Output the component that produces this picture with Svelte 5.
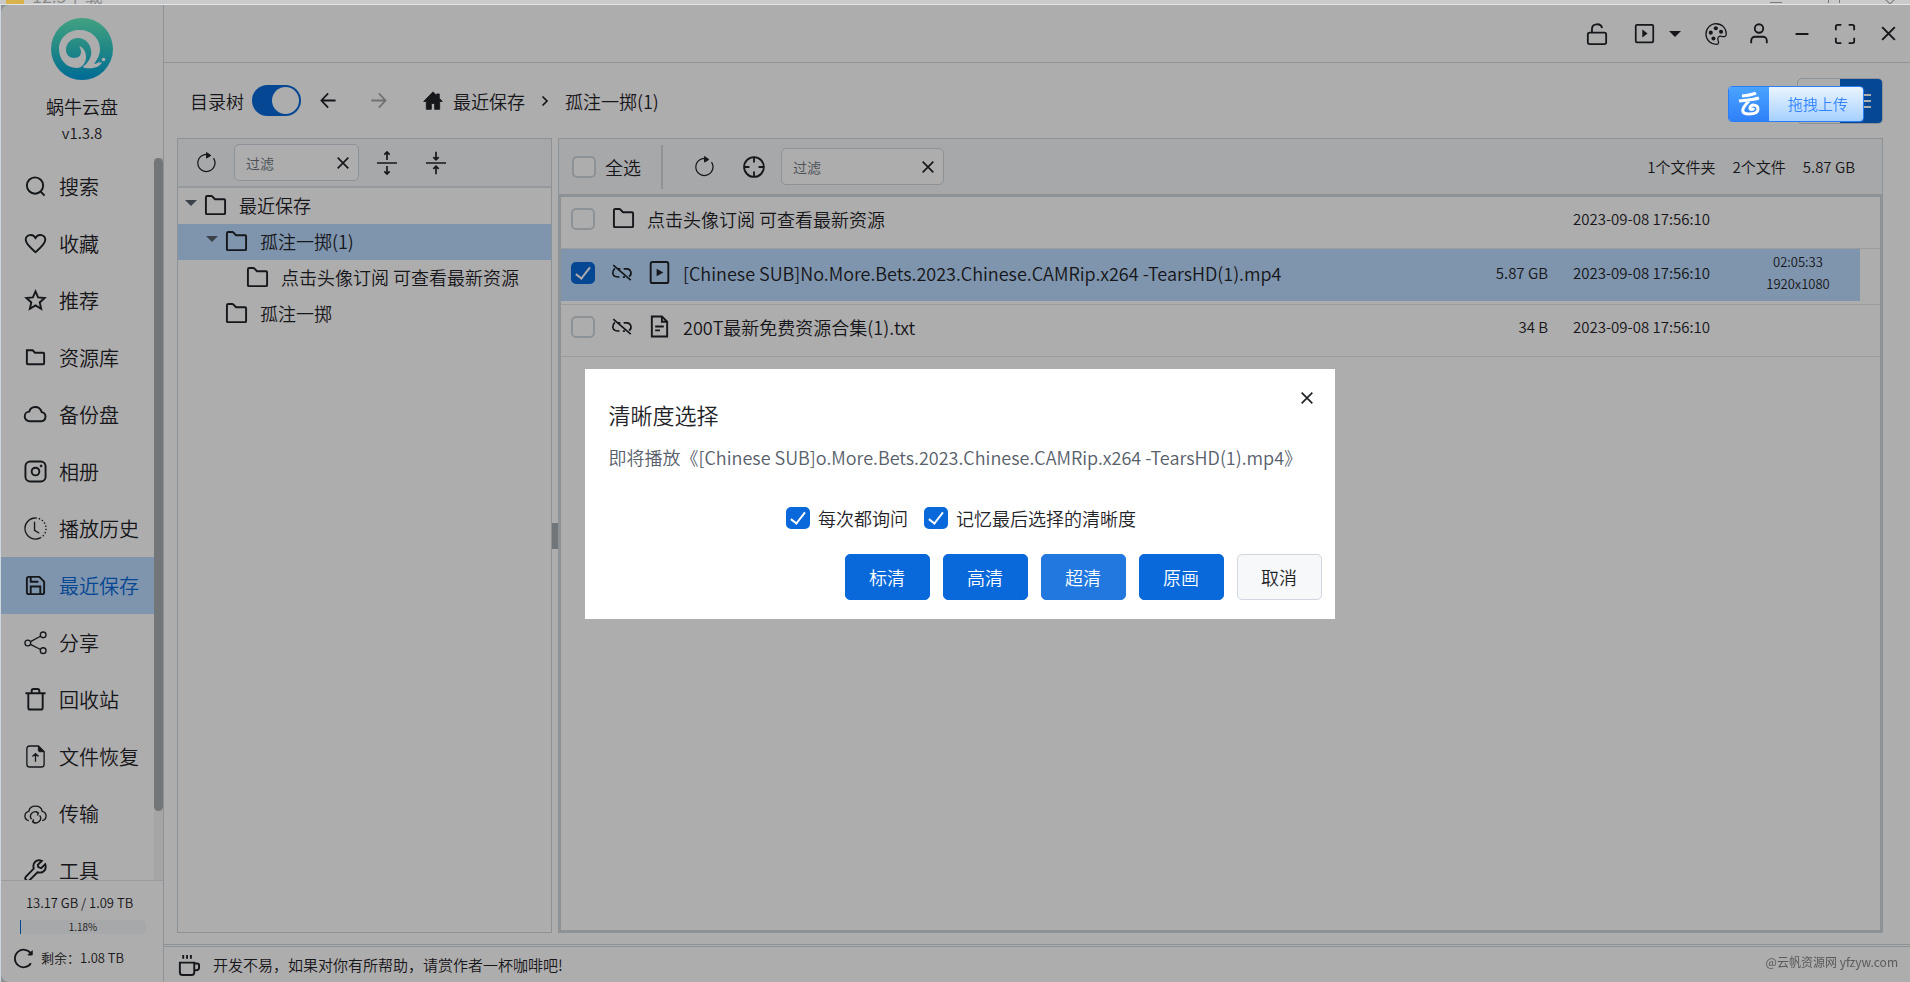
<script>
  const menu = [
    { label: '搜索', icon: 'search' },
    { label: '收藏', icon: 'heart' },
    { label: '推荐', icon: 'star' },
    { label: '资源库', icon: 'folderSmall' },
    { label: '备份盘', icon: 'cloud' },
    { label: '相册', icon: 'album' },
    { label: '播放历史', icon: 'history' },
    { label: '最近保存', icon: 'save' },
    { label: '分享', icon: 'share' },
    { label: '回收站', icon: 'trash' },
    { label: '文件恢复', icon: 'fileUp' },
    { label: '传输', icon: 'transfer' },
    { label: '工具', icon: 'wrench' },
  ];

  const tree = [
    { name: '最近保存', level: 0, open: true },
    { name: '孤注一掷(1)', level: 1, open: true },
    { name: '点击头像订阅 可查看最新资源', level: 2, open: false },
    { name: '孤注一掷', level: 1, open: false },
  ];

  let files = $state([
    { name: '点击头像订阅 可查看最新资源', type: 'folder', size: '', date: '2023-09-08 17:56:10', checked: false },
    {
      name: '[Chinese SUB]No.More.Bets.2023.Chinese.CAMRip.x264 -TearsHD(1).mp4',
      type: 'video',
      size: '5.87 GB',
      date: '2023-09-08 17:56:10',
      duration: '02:05:33',
      resolution: '1920x1080',
      checked: true,
    },
    { name: '200T最新免费资源合集(1).txt', type: 'text', size: '34 B', date: '2023-09-08 17:56:10', checked: false },
  ]);

  let active = $state('最近保存');
  let selectedNode = $state(1);
  let showTree = $state(true);
  let treeFilter = $state('');
  let fileFilter = $state('');
  let askEveryTime = $state(true);
  let rememberLast = $state(true);
  let dialogOpen = $state(true);

  const usedPercent = 1.18;
  const qualities = ['标清', '高清', '超清', '原画'];
  const close = () => (dialogOpen = false);
</script>

{#snippet icon(name, size = 24)}
  <svg class="icon" width={size} height={size} viewBox="0 0 24 24" aria-hidden="true">
    {#if name === 'search'}
      <circle cx="11.5" cy="11" r="8.5" /><path d="M17.5 17.5l4 4" />
    {:else if name === 'heart'}
      <path d="M12 21C8 17.500 1.800 12.800 1.800 8.200 1.800 2.800 9 1.200 12 6.200 15 1.200 22.200 2.800 22.200 8.200 22.200 12.800 16 17.500 12 21z" />
    {:else if name === 'star'}
      <path d="M12 2.500l2.700 6.300 6.800.6-5.100 4.600 1.500 6.700L12 17.200l-5.900 3.500 1.500-6.700-5.100-4.600 6.800-.6z" />
    {:else if name === 'folderSmall'}
      <path d="M3 4.500h6l2.500 2.500H20a1 1 0 0 1 1 1v10a1 1 0 0 1-1 1H4a1 1 0 0 1-1-1z" />
    {:else if name === 'folder'}
      <path d="M2 3.500c0-1 .5-1.500 1.500-1.500h4l1 .5 3 3H21c.7 0 1 .4 1 1V20c0 .7-.4 1-1 1H3c-.7 0-1-.4-1-1z" />
    {:else if name === 'cloud'}
      <path d="M6 19a5 5 0 0 1-.5-10C7 3 16 2 18.500 9.500A4.800 4.800 0 0 1 18 19z" />
    {:else if name === 'album'}
      <rect x="1.500" y="1.500" width="21" height="21" rx="5" /><circle cx="12" cy="12" r="4" /><circle class="solid" cx="17.800" cy="6.200" r="1" />
    {:else if name === 'history'}
      <g class="thin"><path d="M12 1a11 11 0 1 0 5 20.800" /><path d="M12 1a11 11 0 0 1 5 20.800" stroke-dasharray="1.500 2" /><path d="M11 5v9l5 3" /></g>
    {:else if name === 'save'}
      <path d="M5 3h11l5 5v11a2 2 0 0 1-2 2H5a2 2 0 0 1-2-2V5a2 2 0 0 1 2-2zM7 21v-8h10v8M7 3v5h8" />
    {:else if name === 'share'}
      <g class="thin"><circle cx="4" cy="12.500" r="3" /><circle cx="20" cy="4" r="3" /><circle cx="20" cy="20.500" r="3" /><path d="M6.800 11l10.400-5.500M6.800 14l10.400 5.300" /></g>
    {:else if name === 'trash'}
      <path d="M1.500 5.500h21M4.500 5.500V20.500a2 2 0 0 0 2 2h11a2 2 0 0 0 2-2V5.500M8 5.500V3a2 2 0 0 1 2-2h4a2 2 0 0 1 2 2v2.500" />
    {:else if name === 'fileUp'}
      <g class="thin"><path d="M15 1H6a3 3 0 0 0-3 3v16a3 3 0 0 0 3 3h12a3 3 0 0 0 3-3V7zM12 17.500V9M8.800 12l3.200-3 3.200 3" /><path class="solid" d="M15 1v4.500a1.500 1.500 0 0 0 1.500 1.500H21z" /></g>
    {:else if name === 'transfer'}
      <g class="thin"><path d="M5 19.500C-.5 18-.2 11 5 9.800 6 2.500 18 2.500 19 9.800c5.200 1.200 5.500 8.200 0 9.700" /><path d="M7.800 18a4.800 4.800 0 0 1 7-6.500M16.300 14a4.800 4.800 0 0 1-7 6.500" /><path d="M12.500 10l2.500 1.500-1 2.500M11.500 22L9 20.500l1-2.500" /></g>
    {:else if name === 'wrench'}
      <path d="M15 8.500l-.6-2.400 4.200-4.200C12.500-.2 8.500 4.500 10.200 10L2 18.300a2.700 2.700 0 0 0 3.800 3.800L14 13.800c5.500 1.700 10.200-2.300 8.100-8.400L17.900 9.600z" />
    {:else if name === 'refresh'}
      <g class="thin"><path d="M15 3.200A9.800 9.800 0 1 0 20 7" /></g><path class="solid" d="M12 .5l5 3.500-5 3z" />
    {:else if name === 'reload'}
      <path d="M20.500 17.500A10 10 0 1 1 20.500 6.500" /><path class="solid" d="M22 3v5h-5z" />
    {:else if name === 'expand'}
      <path d="M0 12h24M12 8.500V-1M8.800 2L12-1.200 15.200 2M12 15.500V25M8.800 22l3.200 3.200 3.200-3.200" />
    {:else if name === 'collapse'}
      <path d="M0 12h24M12-1.500V8M8.800 5L12 8.200 15.200 5M12 25.500V16M8.800 19l3.200-3.200 3.200 3.200" />
    {:else if name === 'target'}
      <circle cx="12" cy="12" r="10.800" /><path d="M12 1.500V7M12 17v5.500M1.500 12H7M17 12h5.500" />
    {:else if name === 'close'}
      <path d="M4 4l16 16M20 4L4 20" stroke-width="2.500" />
    {:else if name === 'left'}
      <path d="M22 12H3M11.500 2L2 12l9.500 10" stroke-width="2.500" />
    {:else if name === 'right'}
      <path d="M2 12h19M12.500 2L22 12l-9.500 10" stroke-width="2.500" />
    {:else if name === 'home'}
      <path class="solid" d="M12 1L.8 12.500H4V22h6v-7h4v7h6v-9.500h3.200L19.500 8.600V3.500h-3v2.200z" />
    {:else if name === 'chevron'}
      <path d="M7 3l9 9-9 9" stroke-width="3.500" />
    {:else if name === 'caret'}
      <path class="fill" d="M0 6h24L12 18z" />
    {:else if name === 'unlock'}
      <rect x="2" y="10.500" width="20" height="12.500" rx="2" /><path d="M6.500 10.500V6.500C6.500 0 16.500-.2 17.500 5.500" />
    {:else if name === 'playBox'}
      <rect x="2" y="2" width="20" height="20" rx="1.500" /><path class="fill" d="M9.500 7.500v9l6-4.500z" />
    {:else if name === 'palette'}
      <path class="thin" d="M12 .8A11.200 11.200 0 1 0 12.500 23.200c3 0 2.500-2.700 1.700-4.500-1-2.700.8-4.700 3.700-4.200 2.700.7 5.300 1 5.300-2.500C23.200 5.500 18.500.8 12 .8z" />
      <g class="fill"><circle cx="6.300" cy="10.500" r="2.200" /><circle cx="11.800" cy="5.700" r="2.200" /><circle cx="17.500" cy="9.500" r="2.200" /><circle cx="9.200" cy="17" r="2.200" /></g>
    {:else if name === 'user'}
      <circle cx="12" cy="6" r="4.600" /><path d="M3.500 22v-3a4 4 0 0 1 4-4h9a4 4 0 0 1 4 4v3" />
    {:else if name === 'minus'}
      <path d="M5 12h14" />
    {:else if name === 'fullscreen'}
      <path d="M2 8V4a2 2 0 0 1 2-2h4M16 2h4a2 2 0 0 1 2 2v4M22 16v4a2 2 0 0 1-2 2h-4M8 22H4a2 2 0 0 1-2-2v-4" />
    {:else if name === 'unlink'}
      <path d="M1.500 2.500l21 18M10 7H8M3.500 6.500C-.5 10 .5 15 4 16.300c1.500.5 3 .7 5 .2M14 7h4a5 5 0 0 1 2.500 9.200M6.500 7l3 0M13 17h2.500" />
    {:else if name === 'video'}
      <rect x="2.800" y="1" width="18.400" height="22" rx="2" /><path class="fill" d="M9 8v8l7-4z" />
    {:else if name === 'text'}
      <path d="M14.500 1.500H4v21h16V7zM14.500 1.500V7H20M7.500 12h9M7.500 16h5" />
    {:else if name === 'cup'}
      <path d="M3 10h15v10a3 3 0 0 1-3 3H6a3 3 0 0 1-3-3zM18 11h3a2 2 0 0 1 2 2v2a3 3 0 0 1-3 3h-2M6.500 2v4M10.500 2v4M14.500 2v4" />
    {/if}
  </svg>
{/snippet}

<div class="backdrop" aria-hidden="true">
  <span class="backdrop-folder"></span>
  <span class="backdrop-title">12.3下载</span>
  <span class="backdrop-controls"><i class="bar"></i><i class="box"></i><i class="cross"></i></span>
</div>

<div class="window">
  <aside class="sidebar">
    <div class="brand">
      <svg class="logo" width="62" height="62" viewBox="0 0 62 62" aria-hidden="true">
        <defs>
          <linearGradient id="logo-fill" x1="0" y1="0" x2="0" y2="1">
            <stop offset="0" stop-color="#62eebf" />
            <stop offset="0.5" stop-color="#31c8c6" />
            <stop offset="1" stop-color="#009edd" />
          </linearGradient>
        </defs>
        <circle cx="31" cy="31" r="31" fill="url(#logo-fill)" />
        <path
          d="M26 50C15 50 8 41 8 31 8 20 17 12 28.500 12 40 12 49 20 49 31c0 6-3 11-6 15 2 0 4-1 6-3l-1 2 3-1c-2 5-8 7-17 6-3-1-2-2 0-3 5-5 7-10 6-15-1-7-6-12-13-12s-12 5-12 12c0 5 4 8 8 8 5 0 7-3 7-6 0-3-1-4-2-6 5 2 7 6 7 11 0 6-4 11-9 11z"
          fill="#fff"
        />
        <circle cx="52.500" cy="41.500" r="1.800" fill="#fff" />
      </svg>
      <strong>蜗牛云盘</strong>
      <span>v1.3.8</span>
    </div>

    <nav class="menu">
      <ul>
        {#each menu as item}
          <li>
            <button class="menu-item" class:active={active === item.label} onclick={() => (active = item.label)}>
              {@render icon(item.icon, 23)}
              <span>{item.label}</span>
            </button>
          </li>
        {/each}
      </ul>
      <div class="scrollbar"><span></span></div>
    </nav>

    <div class="quota">
      <span>13.17 GB / 1.09 TB</span>
      <div class="progress">
        <i style="width: {usedPercent}%"></i>
        <span>{usedPercent}%</span>
      </div>
      <div class="remain">
        <button aria-label="刷新容量">{@render icon('reload', 21)}</button>
        <span>剩余：1.08 TB</span>
      </div>
    </div>
  </aside>

  <main class="main">
    <header class="titlebar">
      <button aria-label="锁定">{@render icon('unlock', 22)}</button>
      <div class="player">
        <button aria-label="播放器">{@render icon('playBox', 21)}</button>
        <button aria-label="播放器选项">{@render icon('caret', 12)}</button>
      </div>
      <button aria-label="主题">{@render icon('palette', 22)}</button>
      <button aria-label="用户">{@render icon('user', 22)}</button>
      <button aria-label="最小化">{@render icon('minus', 22)}</button>
      <button aria-label="最大化">{@render icon('fullscreen', 22)}</button>
      <button class="quit" aria-label="关闭">{@render icon('close', 19)}</button>
    </header>

    <div class="pathbar">
      <label class="switch">
        <span>目录树</span>
        <input type="checkbox" bind:checked={showTree} />
      </label>
      <button aria-label="后退">{@render icon('left', 17)}</button>
      <button aria-label="前进" disabled>{@render icon('right', 17)}</button>
      <div class="crumbs">
        <a href="#home" aria-label="主页">{@render icon('home', 20)}</a>
        <a href="#recent">最近保存</a>
        {@render icon('chevron', 12)}
        <a href="#current">孤注一掷(1)</a>
      </div>
      <div class="views">
        <button aria-label="网格视图"></button>
        <button class="on" aria-label="列表视图"><i></i><i></i><i></i></button>
      </div>
    </div>

    <div class="panes">
      <section class="tree">
        <div class="tree-tools">
          <button class="tool" aria-label="刷新目录">{@render icon('refresh', 21)}</button>
          <div class="filter">
            <input type="text" placeholder="过滤" aria-label="过滤目录" bind:value={treeFilter} />
            <button aria-label="清除" onclick={() => (treeFilter = '')}>{@render icon('close', 16)}</button>
          </div>
          <button class="tool" aria-label="全部展开">{@render icon('expand', 20)}</button>
          <button class="tool" aria-label="全部折叠">{@render icon('collapse', 20)}</button>
        </div>
        <ul>
          {#each tree as node, i}
            <li>
              <button class="node level-{node.level}" class:active={selectedNode === i} onclick={() => (selectedNode = i)}>
                <span class="arrow">{#if node.open}{@render icon('caret', 12)}{/if}</span>
                {@render icon('folder', 23)}
                <span class="node-name">{node.name}</span>
              </button>
            </li>
          {/each}
        </ul>
      </section>

      <div class="splitter"><span></span></div>

      <section class="files">
        <div class="file-tools">
          <label class="select-all"><input class="check" type="checkbox" /><span>全选</span></label>
          <button class="tool" aria-label="刷新">{@render icon('refresh', 21)}</button>
          <button class="tool" aria-label="定位">{@render icon('target', 22)}</button>
          <div class="filter wide">
            <input type="text" placeholder="过滤" aria-label="过滤文件" bind:value={fileFilter} />
            <button aria-label="清除" onclick={() => (fileFilter = '')}>{@render icon('close', 16)}</button>
          </div>
          <div class="summary"><span>1个文件夹</span><span>2个文件</span><span>5.87 GB</span></div>
        </div>
        <div class="file-list">
          <table>
            <tbody>
              {#each files as file}
                <tr class:selected={file.checked}>
                  <td class="col-check"><input class="check" type="checkbox" aria-label={file.name} bind:checked={file.checked} /></td>
                  <td>
                    <div class="file-name">
                      {#if file.type === 'folder'}
                        {@render icon('folder', 23)}
                      {:else}
                        {@render icon('unlink', 20)}
                        {@render icon(file.type, 23)}
                      {/if}
                      <span>{file.name}</span>
                    </div>
                  </td>
                  <td class="col-size">{file.size}</td>
                  <td class="col-date">{file.date}</td>
                  <td class="col-media">
                    {#if file.duration}
                      <span>{file.duration}</span>
                      <span>{file.resolution}</span>
                    {/if}
                  </td>
                </tr>
              {/each}
            </tbody>
          </table>
        </div>
      </section>
    </div>

    <footer class="footer">
      {@render icon('cup', 23)}
      <span>开发不易，如果对你有所帮助，请赏作者一杯咖啡吧!</span>
    </footer>
  </main>
</div>

{#if dialogOpen}
  <div class="overlay">
    <div class="dialog" role="dialog" aria-modal="true" aria-labelledby="dialog-title">
      <button class="dialog-close" aria-label="关闭对话框" onclick={close}>{@render icon('close', 16)}</button>
      <h2 id="dialog-title">清晰度选择</h2>
      <p>即将播放《[Chinese SUB]o.More.Bets.2023.Chinese.CAMRip.x264 -TearsHD(1).mp4》</p>
      <div class="options">
        <label><input class="check" type="checkbox" bind:checked={askEveryTime} />每次都询问</label>
        <label><input class="check" type="checkbox" bind:checked={rememberLast} />记忆最后选择的清晰度</label>
      </div>
      <div class="actions">
        {#each qualities as quality}
          <button class="primary" class:hover={quality === '超清'} onclick={close}>{quality}</button>
        {/each}
        <button onclick={close}>取消</button>
      </div>
    </div>
  </div>
{/if}

<button class="upload">
  <span class="upload-logo">
    <svg width="24" height="24" viewBox="0 0 24 24" aria-hidden="true">
      <path d="M5 4c5-.5 9-1 14-3M2 9c6-1 13-1 20-3M12 9c-3 3-5 5-6 8-1 4 2 5 6 5 6 0 9-2 9-5 0-5-8-5-8-1 0 2 3 2 4 0" />
    </svg>
  </span>
  <span class="upload-text">拖拽上传</span>
</button>

<span class="watermark">@云帆资源网 yfzyw.com</span>

<style>
  :global(body) {
    background: #cfd6dd;
    font-family: "Noto Sans CJK SC", "Noto Sans", sans-serif;
    font-size: 18px;
    font-weight: 350;
    line-height: 24px;
    color: #1f2328;
  }

  button {
    display: flex;
    align-items: center;
    justify-content: center;
    padding: 0;
    border: 0;
    background: none;
    color: inherit;
    font: inherit;
    cursor: pointer;
  }

  a {
    display: flex;
    color: inherit;
    text-decoration: none;
  }

  ul {
    margin: 0;
    padding: 0;
    list-style: none;
  }

  .icon {
    display: block;
    flex: none;
    fill: none;
    stroke: currentColor;
    stroke-width: 2;
    overflow: visible;
  }

  .icon .thin {
    stroke-width: 1.4;
  }

  .icon .solid {
    fill: currentColor;
    stroke-width: 1;
  }

  .icon .fill {
    fill: currentColor;
    stroke: none;
  }

  /* sliver of the window behind */
  .backdrop {
    display: flex;
    height: 4px;
    padding: 0 16px 0 6px;
    overflow: hidden;
    background: #c9cac9;
    border-bottom: 1px solid #e1e6eb;
    color: #888;
  }

  .backdrop-folder {
    width: 18px;
    background: #d9b24c;
  }

  .backdrop-title {
    margin: -17px 0 0 8px;
    height: 24px;
  }

  .backdrop-controls {
    display: flex;
    gap: 46px;
    margin-left: auto;
  }

  .backdrop-controls i {
    box-sizing: border-box;
    width: 12px;
    height: 3px;
  }

  .backdrop-controls .bar {
    border-bottom: 1px solid #777;
  }

  .backdrop-controls .box {
    border: solid #777;
    border-width: 0 1px;
  }

  .backdrop-controls .cross {
    width: 8px;
    height: 8px;
    margin-top: -5px;
    border: solid #777;
    border-width: 0 1px 1px 0;
    transform: rotate(45deg);
  }

  .window {
    display: flex;
    height: calc(100vh - 5px);
    margin-left: 1px;
    background: #fff;
    border-radius: 8px 0 0 8px;
    overflow: hidden;
  }

  .sidebar {
    display: flex;
    flex-direction: column;
    flex: none;
    width: 162px;
    border-right: 1px solid #d0d7de;
  }

  .brand {
    display: flex;
    flex-direction: column;
    align-items: center;
    flex: none;
    height: 153px;
    padding-top: 13px;
    box-sizing: border-box;
  }

  .brand strong {
    margin-top: 14px;
    font-weight: 350;
  }

  .brand span {
    margin-top: 3px;
    font-size: 15px;
  }

  .menu {
    display: flex;
    flex: 1;
    min-height: 0;
    overflow: hidden;
  }

  .menu ul {
    flex: 1;
  }

  .menu-item {
    justify-content: flex-start;
    gap: 12px;
    width: 100%;
    height: 57px;
    padding-left: 23px;
    font-size: 20px;
  }

  .menu-item.active {
    background: #bbdcff;
  }

  .menu-item.active span {
    color: #0969da;
  }

  .scrollbar {
    flex: none;
    width: 9px;
    background: #f3f3f3;
  }

  .scrollbar span {
    display: block;
    height: 90.500%;
    border-radius: 5px;
    background: #a9afb3;
  }

  .quota {
    flex: none;
    padding: 10px 17px 12px 12px;
    border-top: 1px solid #e3e6e9;
    font-size: 13px;
    text-align: center;
  }

  .progress {
    position: relative;
    height: 14px;
    margin: 5px 0 12px 7px;
    border-radius: 5px;
    background: #f6f8fa;
    font-size: 10px;
    line-height: 14px;
  }

  .progress i {
    position: absolute;
    left: 0;
    height: 14px;
    background: #0969da;
  }

  .remain {
    display: flex;
    align-items: center;
    gap: 7px;
  }

  .main {
    display: flex;
    flex-direction: column;
    flex: 1;
    min-width: 0;
  }

  .titlebar {
    display: flex;
    align-items: center;
    justify-content: flex-end;
    flex: none;
    gap: 21px;
    height: 57px;
    padding-right: 11px;
    border-bottom: 1px solid #d8dbde;
  }

  .quit {
    width: 22px;
  }

  .player {
    display: flex;
    gap: 14px;
    margin: 0 3px 0 5px;
  }

  .pathbar {
    display: flex;
    align-items: center;
    flex: none;
    height: 75px;
    padding: 0 27px 0 26px;
  }

  .pathbar > button {
    width: 50px;
  }

  .pathbar > button:disabled {
    opacity: 0.4;
  }

  .switch {
    display: flex;
    align-items: center;
    gap: 8px;
  }

  .switch input {
    display: flex;
    appearance: none;
    width: 49px;
    height: 31px;
    margin: 0 2px 0 0;
    padding: 2px;
    box-sizing: border-box;
    border-radius: 16px;
    background: #d0d7de;
  }

  .switch input::before {
    content: "";
    width: 27px;
    height: 27px;
    border-radius: 50%;
    background: #fff;
  }

  .switch input:checked {
    justify-content: flex-end;
    background: #0969da;
  }

  .crumbs {
    display: flex;
    align-items: center;
    gap: 14px;
    margin-left: 20px;
  }

  .crumbs a:first-child {
    margin-right: -4px;
  }

  .views {
    display: flex;
    width: 86px;
    height: 46px;
    margin-left: auto;
    box-sizing: border-box;
    border: 1px solid #d0d7de;
    border-radius: 5px;
    overflow: hidden;
  }

  .views button {
    flex: 1;
    flex-direction: column;
    gap: 4px;
  }

  .views .on {
    background: #0969da;
  }

  .views i {
    width: 20px;
    height: 2px;
    background: #fff;
  }

  .panes {
    display: flex;
    flex: 1;
    min-height: 0;
    padding: 0 27px 11px 13px;
  }

  .tree {
    flex: none;
    width: 373px;
    border: 1px solid #d0d7de;
  }

  .tree-tools,
  .file-tools {
    display: flex;
    align-items: center;
    background: #f6f8fa;
  }

  .tree-tools {
    height: 47px;
    padding-left: 7px;
    border-bottom: 2px solid #dce1e6;
  }

  .tool {
    width: 43px;
    height: 37px;
    margin-right: 6px;
  }

  .filter {
    display: flex;
    align-items: center;
    width: 125px;
    height: 37px;
    margin-right: 6px;
    box-sizing: border-box;
    border: 1px solid #d0d7de;
    border-radius: 5px;
    background: #fff;
  }

  .filter.wide {
    width: 163px;
  }

  .filter input {
    flex: 1;
    min-width: 0;
    padding: 0 0 0 11px;
    border: 0;
    outline: 0;
    background: none;
    color: inherit;
    font: inherit;
    font-size: 14px;
  }

  .filter input::placeholder {
    color: #6e7781;
  }

  .filter button {
    width: 30px;
  }

  .node {
    justify-content: flex-start;
    width: 100%;
    height: 36px;
    padding: 0 0 2px 7px;
  }

  .node.level-1 {
    padding-left: 28px;
  }

  .node.level-2 {
    padding-left: 49px;
  }

  .node.active {
    background: #bbdcff;
  }

  .arrow {
    width: 19px;
    padding-bottom: 4px;
    color: #57606a;
  }

  .node-name {
    margin-left: 12px;
  }

  .splitter {
    display: flex;
    align-items: center;
    flex: none;
    width: 6px;
  }

  .splitter span {
    width: 6px;
    height: 26px;
    background: #a9afb3;
  }

  .files {
    display: flex;
    flex-direction: column;
    flex: 1;
    min-width: 0;
  }

  .file-tools {
    flex: none;
    height: 55px;
    padding: 0 27px 0 13px;
    border: 1px solid #d0d7de;
    border-bottom: 0;
  }

  .select-all {
    display: flex;
    align-items: center;
    gap: 9px;
    width: 89px;
    height: 44px;
    margin-right: 20px;
    border-right: 2px solid #d0d7de;
  }

  .check {
    display: flex;
    align-items: center;
    justify-content: center;
    flex: none;
    appearance: none;
    width: 24px;
    height: 22px;
    margin: 0;
    border: 2px solid #d0d7de;
    border-radius: 5px;
    background: #fff;
    box-sizing: border-box;
  }

  .check:checked {
    border-color: #0969da;
    background: #0969da;
  }

  .check:checked::before {
    content: "";
    width: 8px;
    height: 15px;
    margin-bottom: 3px;
    border: solid #fff;
    border-width: 0 2px 2px 0;
    box-sizing: border-box;
    transform: rotate(38deg);
  }

  .summary {
    display: flex;
    gap: 17px;
    margin-left: auto;
    font-size: 15px;
  }

  .file-list {
    flex: 1;
    min-height: 0;
    padding-right: 20px;
    border: 3px solid #d0d7de;
    /* row lines run under the scrollbar gutter */
    background:
      linear-gradient(#e3e6e9, #e3e6e9) 0 51px / 100% 1px no-repeat,
      linear-gradient(#e3e6e9, #e3e6e9) 0 107px / 100% 1px no-repeat,
      linear-gradient(#e3e6e9, #e3e6e9) 0 159px / 100% 1px no-repeat;
  }

  table {
    width: 100%;
    border-spacing: 0;
  }

  td {
    box-sizing: border-box;
    height: 52px;
    padding: 0 0 9px;
    vertical-align: middle;
  }

  tr.selected td {
    height: 56px;
    padding-bottom: 5px;
    border-bottom: 4px solid transparent;
    background: #bbdcff;
    background-clip: padding-box;
  }

  .col-check {
    width: 51px;
  }

  .col-check .check {
    margin-left: 10px;
  }

  .file-name {
    display: flex;
    align-items: center;
  }

  .file-name :global(.icon) {
    margin-right: 12px;
  }

  .file-name :global(.icon + .icon) {
    margin-left: 4px;
  }

  .col-size,
  .col-date {
    font-size: 15px;
    text-align: right;
    white-space: nowrap;
  }

  .col-size {
    width: 120px;
  }

  .col-date {
    width: 162px;
  }

  .col-media {
    width: 150px;
    padding-left: 26px;
    font-size: 13px;
    line-height: 22px;
    text-align: center;
  }

  .col-media span {
    display: block;
  }

  .footer {
    display: flex;
    align-items: center;
    flex: none;
    gap: 13px;
    height: 35px;
    padding-left: 13px;
    border-top: 3px double #d0d7de;
    font-size: 15px;
  }

  .overlay {
    position: fixed;
    inset: 5px 0 0 1px;
    display: flex;
    align-items: center;
    justify-content: center;
    padding-left: 8px;
    background: rgba(0, 0, 0, 0.32);
  }

  .dialog {
    position: relative;
    width: 750px;
    padding: 33px 13px 19px 24px;
    box-sizing: border-box;
    background: #fff;
  }

  .dialog-close {
    position: absolute;
    top: 17px;
    right: 16px;
    width: 24px;
    height: 24px;
  }

  .dialog h2 {
    margin: 0;
    font-size: 22px;
    font-weight: 350;
  }

  .dialog p {
    margin: 19px 0 37px;
    color: #57606a;
  }

  .options {
    display: flex;
    justify-content: center;
    gap: 16px;
    padding-right: 8px;
  }

  .options label {
    display: flex;
    align-items: center;
    gap: 8px;
  }

  .actions {
    display: flex;
    justify-content: flex-end;
    gap: 13px;
    margin-top: 24px;
  }

  .actions button {
    width: 85px;
    height: 46px;
    box-sizing: border-box;
    border: 1px solid #d0d7de;
    border-radius: 5px;
    background: #f6f8fa;
  }

  .actions .primary {
    border-color: #0969da;
    background: #0969da;
    color: #fff;
  }

  .actions .hover {
    border-color: #2378df;
    background: #2378df;
  }

  /* floating drop target that always stays on top */
  .upload {
    position: fixed;
    top: 86px;
    right: 46px;
    width: 136px;
    height: 36px;
    box-sizing: border-box;
    border: 1px solid #2b7df5;
    border-radius: 4px;
    overflow: hidden;
    align-items: stretch;
    background: linear-gradient(#eaf4ff, #a6d0ff);
    color: #3385ff;
    font-size: 15px;
  }

  .upload-logo {
    display: flex;
    align-items: center;
    justify-content: center;
    width: 40px;
    background: linear-gradient(#4aa3ff, #2f80f8);
  }

  .upload-logo path {
    fill: none;
    stroke: #fff;
    stroke-width: 3;
  }

  .upload-text {
    display: flex;
    align-items: center;
    flex: 1;
    justify-content: center;
    padding-left: 4px;
  }

  .watermark {
    position: fixed;
    right: 12px;
    bottom: 8px;
    color: #5a5a5a;
    font-size: 12px;
    font-weight: 400;
  }
</style>
